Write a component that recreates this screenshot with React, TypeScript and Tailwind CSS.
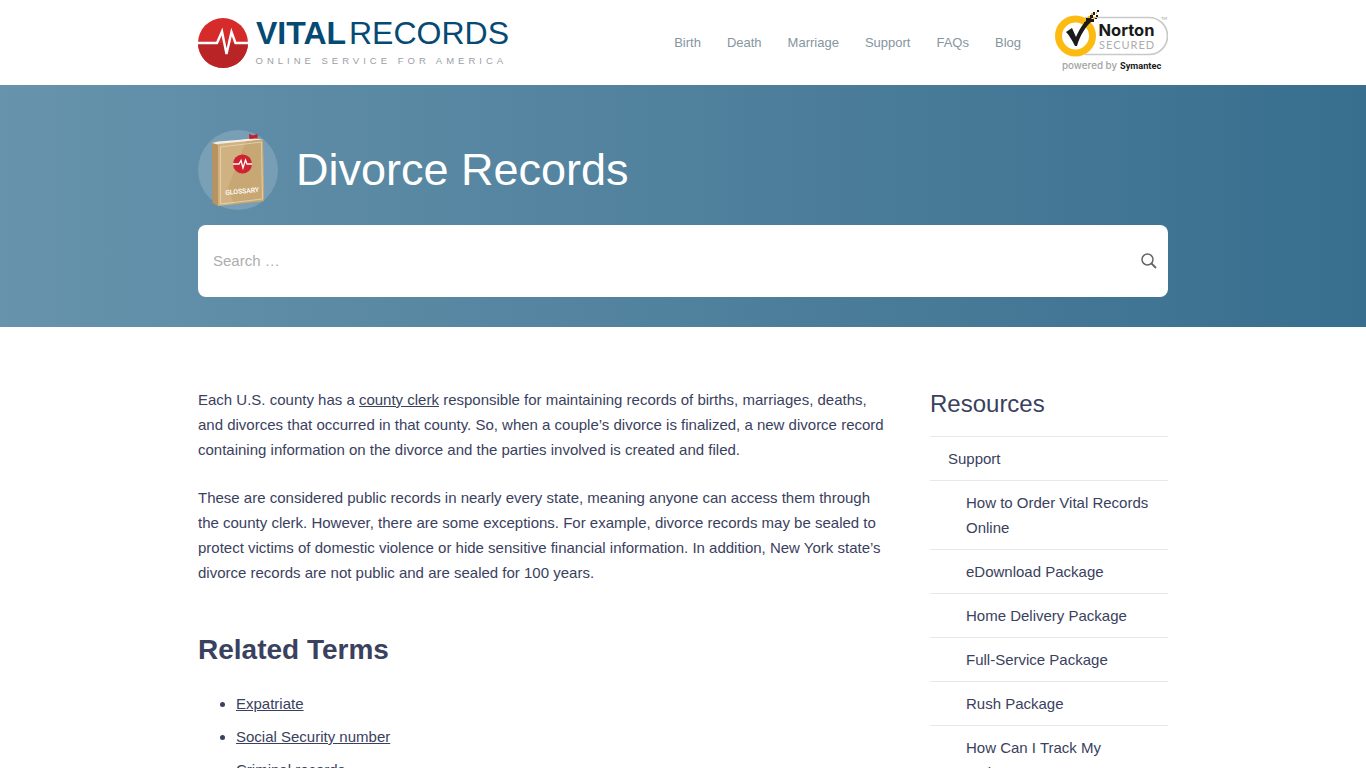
const navLinks = ["Birth", "Death", "Marriage", "Support", "FAQs", "Blog"];

const resources = [
  "How to Order Vital Records Online",
  "eDownload Package",
  "Home Delivery Package",
  "Full-Service Package",
  "Rush Package",
  "How Can I Track My Order\u00a0Status?",
];

const relatedTerms = ["Expatriate", "Social Security number", "Criminal records"];

function Logo() {
  return (
    <svg width="314" height="52" viewBox="0 0 314 52" role="img" aria-label="Vital Records">
      <circle cx="25" cy="26" r="25" fill="#d62b2b" />
      <path d="M0 26a25 25 0 0 0 50 0z" fill="#b92427" />
      <path
        d="M0 26H19L24 14.5L28.5 37L33.5 15L37.5 26H50"
        fill="none"
        stroke="#fff"
        strokeWidth="2.4"
        strokeLinejoin="miter"
      />
      <g fontFamily="'Liberation Sans', Arial, sans-serif">
        <text x="58" y="27" fontSize="32" fontWeight="700" fill="#054a73">VITAL</text>
        <text x="151" y="27" fontSize="32" fill="#054a73">RECORDS</text>
        <text x="57.5" y="47" fontSize="9.5" letterSpacing="4" fill="#9b9ea5">ONLINE SERVICE FOR AMERICA</text>
      </g>
    </svg>
  );
}

function NortonBadge() {
  return (
    <svg width="113" height="64" viewBox="0 0 113 64" role="img" aria-label="Norton Secured">
      <path d="M30 8.500H94a18.5 18.5 0 0 1 0 37H30" fill="#fff" stroke="#c9c9c9" strokeWidth="1.7" />
      <circle cx="20.500" cy="27" r="20.5" fill="#fff" />
      <circle cx="20.500" cy="27" r="17" fill="#fff" stroke="#fdbb12" strokeWidth="7" />
      <path d="M11 23L17 19L21 28C25 19 29 13 35 8L38 11C31 17 25 26 22 37H20C17 31 14 26 11 23Z" fill="#1a1a1a" />
      <path
        d="M31 9h3v3h-3zM35 6h3v3h-3zM38 3h2v3h-2zM41 6h2v2h-2zM42 1h2v2h-2zM36 10h3v3h-3zM29 13h3v3h-3zM40 9h2v1h-2z"
        fill="#1a1a1a"
      />
      <path d="M33 7h2v2h-2zM38 8h2v2h-2zM36 4h2v2h-2zM41 3h1v2h-1z" fill="#fdbb12" />
      <text x="43.500" y="27" fontFamily="Inter, sans-serif" fontSize="16.500" fontWeight="700" fill="#1a1a1a">Norton</text>
      <text x="44" y="40" fontFamily="Lato, sans-serif" fontSize="11" letterSpacing="1" fill="#adadad">SECURED</text>
      <text x="7" y="60" fontFamily="Inter, sans-serif" fontSize="9.800" fontWeight="500" fill="#a3a3a3">powered by</text>
      <text x="65" y="60" fontFamily="Roboto, sans-serif" fontSize="9.200" fontWeight="700" fill="#1a1a1a">Symantec</text>
      <text x="106" y="11" fontFamily="Lato, sans-serif" fontSize="4" fill="#999">TM</text>
    </svg>
  );
}

function GlossaryIcon() {
  return (
    <svg className="shrink-0" width="80" height="80" viewBox="0 0 80 80" aria-hidden="true">
      <circle cx="40" cy="40" r="40" fill="#fff" fillOpacity=".16" />
      <path d="M15 14L56 8L65 10L22 15Z" fill="#f3efe4" />
      <path d="M51 4l4 1.5L59.500 4v6l-8 1z" fill="#c51f2b" />
      <path d="M14 13L20 14V76L14.500 73Z" fill="#b8935f" />
      <path d="M14 13L20 11.500L58 8.500L65 10L20 14.500Z" fill="#f3efe4" />
      <path d="M20 14L65 9.500L66 71L20 76Z" fill="#cfb182" />
      <path d="M48 11.500L65 9.500L66 71L36 74.500L30 58Z" fill="#c3a26d" fillOpacity=".7" />
      <path d="M22.500 17L63.500 12L64.500 69L22.500 74Z" fill="none" stroke="#e9d8b4" strokeWidth=".8" />
      <circle cx="44.500" cy="34" r="9.500" fill="#cf2430" />
      <path d="M35 34H41L43 30.500L45 38L47.500 30L49 34H54" fill="none" stroke="#fff" strokeWidth="1.300" />
      <text
        x="27.500"
        y="65"
        transform="rotate(-5 27 65)"
        fontFamily="Roboto, sans-serif"
        fontSize="6.800"
        fontWeight="500"
        fill="#fff"
      >
        GLOSSARY
      </text>
    </svg>
  );
}

function Header() {
  return (
    <header className="bg-white">
      <div className="mx-auto flex h-[85px] max-w-[970px] items-center justify-between">
        <a href="#">
          <Logo />
        </a>
        <div className="flex items-center gap-[34px]">
          <nav className="flex gap-[26px] text-[13px] text-[#8595a0]">
            {navLinks.map((link) => (
              <a key={link} href="#">{link}</a>
            ))}
          </nav>
          <a href="#" className="-mt-1">
            <NortonBadge />
          </a>
        </div>
      </div>
    </header>
  );
}

function Hero() {
  return (
    <section className="bg-linear-to-r from-[#6793ac] to-[#386f8e] pt-[45px] pb-[30px]">
      <div className="mx-auto max-w-[970px]">
        <div className="flex items-center gap-[18px]">
          <GlossaryIcon />
          <h1 className="text-[45px] leading-[50px] text-white">Divorce Records</h1>
        </div>
        <form
          className="mt-[15px] flex h-[72px] items-center rounded-lg bg-white pr-[11px] pl-[15px]"
          onSubmit={(e) => e.preventDefault()}
        >
          <input
            type="search"
            aria-label="Search"
            placeholder="Search …"
            className="h-full min-w-0 flex-1 pb-0.5 text-[15px] outline-none placeholder:text-[#adadad]"
          />
          <button type="submit" aria-label="Submit search">
            <svg width="16" height="16" viewBox="0 0 16 16" fill="none" stroke="#666" strokeWidth="1.5">
              <circle cx="6.500" cy="6.500" r="5.500" />
              <path d="M10.500 10.500L15 15" strokeWidth="1.800" />
            </svg>
          </button>
        </form>
      </div>
    </section>
  );
}

function Article() {
  return (
    <main className="min-w-0 flex-1">
      <p className="mb-[23px]">
        Each U.S. county has a <a href="#" className="underline">county clerk</a> responsible for maintaining
        records of births, marriages, deaths, and divorces that occurred in that county. So, when a couple’s
        divorce is finalized, a new divorce record containing information on the divorce and the parties
        involved is created and filed.
      </p>
      <p>
        These are considered public records in nearly every state, meaning anyone can access them through the
        county clerk. However, there are some exceptions. For example, divorce records may be sealed to protect
        victims of domestic violence or hide sensitive financial information. In addition, New York state’s
        divorce records are not public and are sealed for 100 years.
      </p>
      <h2 className="mt-12 mb-6 text-[28px] leading-[34px] font-bold">Related Terms</h2>
      <ul className="list-disc space-y-2 pl-[38px]">
        {relatedTerms.map((term) => (
          <li key={term}>
            <a href="#" className="underline">{term}</a>
          </li>
        ))}
      </ul>
    </main>
  );
}

function Sidebar() {
  return (
    <aside className="w-[238px] shrink-0">
      <h3 className="mb-[15px] text-2xl leading-[34px]">Resources</h3>
      <ul>
        <li>
          <a href="#" className="block border-t border-[#e8e8e8] py-[9px] pl-[18px]">Support</a>
          <ul>
            {resources.map((item) => (
              <li key={item} className="border-t border-[#e8e8e8] py-[9px] pr-4 pl-9">
                <a href="#">{item}</a>
              </li>
            ))}
          </ul>
        </li>
      </ul>
    </aside>
  );
}

export default function App() {
  return (
    <div className="min-h-screen bg-white font-['Liberation_Sans',Arial,sans-serif] text-[15px] leading-[25px] text-[#3a415e]">
      <Header />
      <Hero />
      <div className="mx-auto flex max-w-[970px] gap-11 pt-[60px]">
        <Article />
        <Sidebar />
      </div>
    </div>
  );
}
